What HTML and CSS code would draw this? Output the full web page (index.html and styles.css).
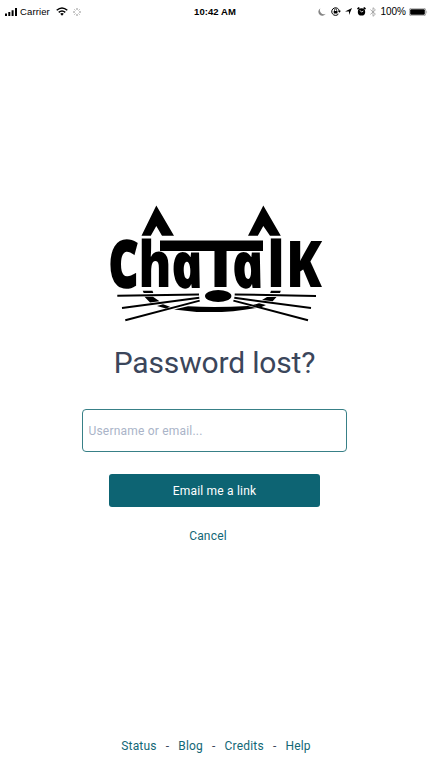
FILE: index.html
```html
<!DOCTYPE html>
<html lang="en">
<head>
<meta charset="utf-8">
<title>Password lost?</title>
<link rel="stylesheet" href="styles.css">
</head>
<body>
<header class="status">
  <div class="side">
    <svg class="signal" width="13" height="8" viewBox="0 0 13 8"><path d="M0 5.5h2V8H0zM3.3 4h2v4h-2zM6.6 2.2h2V8h-2zM10 0h2v8h-2z"/></svg>
    <span class="carrier">Carrier</span>
    <svg class="wifi" width="12" height="9" viewBox="0 0 12 9"><g fill="none" stroke="#000" stroke-width="1.5"><path d="M.7 3.3q5.3-4.6 10.6 0M2.7 5.3q3.3-2.7 6.6 0"/></g><path d="M4.2 6.8q1.8-1.4 3.6 0L6 8.7z"/></svg>
    <svg class="spinner" width="8" height="8" viewBox="0 0 8 8"><g stroke="#777" stroke-width=".8"><path d="M4 0v2M4 6v2M0 4h2M6 4h2"/><path stroke="#aaa" d="M1.2 1.2l1.4 1.4M5.4 5.4l1.4 1.4M1.2 6.8l1.4-1.4M5.4 2.6l1.4-1.4"/></g></svg>
  </div>
  <time class="clock">10:42 AM</time>
  <div class="side right">
    <svg class="moon" width="8" height="8" viewBox="0 0 8 8"><path fill="#858585" d="M2.5.2A4 4 0 1 0 7.8 5.8 4 4 0 0 1 2.5.2z"/></svg>
    <svg class="lock" width="10" height="9" viewBox="0 0 10 9"><path fill="none" stroke="#000" d="M7.4 7.1A3.8 3.8 0 1 1 8.3 4"/><path d="M6.8 3.8H10L8.4 5.8zM2.7 4h3.8v2.6H2.7z"/><path fill="none" stroke="#000" stroke-width=".7" d="M3.5 4V3a1.1 1.1 0 0 1 2.2 0v1"/></svg>
    <svg class="arrow" width="7" height="7" viewBox="0 0 7 7"><path d="M7 0L4 7V3.4H0z"/></svg>
    <svg class="alarm" width="9" height="9" viewBox="0 0 9 9"><circle cx="4.5" cy="4.9" r="3.7"/><path stroke="#000" stroke-width="1.6" d="M.5 2L2.4.6M8.5 2L6.6.6"/><path fill="none" stroke="#fff" stroke-width=".8" d="M3 3.3l1.5 1.8L6.3 4"/></svg>
    <svg class="bluetooth" width="6" height="10" viewBox="0 0 6 10"><path fill="none" stroke="#999" stroke-width=".8" d="M.4 2.6l5 4.5L3 9.3V.7l2.4 2.2-5 4.5"/></svg>
    <span class="percent">100%</span>
    <svg class="battery" width="19" height="8" viewBox="0 0 19 8"><rect x=".3" y=".3" width="16.4" height="7.4" rx="1.8" fill="none" stroke="#777" stroke-width=".6"/><rect x="1.2" y="1.2" width="14.6" height="5.6" rx="1"/><path fill="#888" d="M17.5 2.6q1.4 1.4 0 2.8z"/></svg>
  </div>
</header>
<main class="content">
  <svg class="logo" width="216" height="120" viewBox="108 203 216 120" role="img" aria-label="ChaTalK">
    <path d="M156.3 205.5L174 235.8H162L156.3 226l-5.5 9.8H141.5zM263.3 205.5L280.8 235.8H270L263.3 226l-5.5 9.8H248zM160 240.5H263V251H160z"/>
    <g class="letters">
      <text class="bold" transform="translate(109 287)" textLength="29" lengthAdjust="spacingAndGlyphs">C</text>
      <text transform="translate(138.6 287)" textLength="33" lengthAdjust="spacingAndGlyphs">h</text>
      <text class="upright" transform="translate(174.5 287.5) skewX(11)" textLength="32" lengthAdjust="spacingAndGlyphs">a</text>
      <text transform="translate(202 287)" textLength="37" lengthAdjust="spacingAndGlyphs">T</text>
      <text class="upright" transform="translate(235.3 287.5) skewX(11)" textLength="32" lengthAdjust="spacingAndGlyphs">a</text>
      <text transform="translate(267.2 287)" textLength="17.5" lengthAdjust="spacingAndGlyphs">l</text>
      <text transform="translate(286 287)" textLength="36" lengthAdjust="spacingAndGlyphs">K</text>
    </g>
    <path d="M142.7 290.8h9.8l.8 2.2h-9.6zM144.5 296.8h8.5l6.5 4.4-9.5 1.3zM157 306l6-1.8 7 2.5-4 1.8zM174 309.4l14-3.2q28 1.6 60-.3l8 2q-41 7.5-82 1.5zM280.8 290.8H271l-.8 2.2H280zM276.5 297h-9.5l-5 2.9 10.7 1.3zM266 305l-7-1.8-6 1.8 8 2.2z"/>
    <ellipse cx="218.2" cy="296" rx="13.2" ry="6"/>
    <path class="whiskers" d="M117.3 295.7l81.7-1.3M122 308l77.3-10.2M125.3 320.2l74.4-19.6M234.7 294.4l81.3 1.5M234.3 297.8L311 308M233.4 300.6l74.6 19.6"/>
  </svg>
  <h1>Password lost?</h1>
  <form>
    <input type="text" placeholder="Username or email..." aria-label="Username or email">
    <button type="button">Email me a link</button>
  </form>
  <a class="cancel">Cancel</a>
</main>
<footer><a>Status</a><span>-</span><a>Blog</a><span>-</span><a>Credits</a><span>-</span><a>Help</a></footer>
</body>
</html>
```
FILE: styles.css
```css
* { box-sizing: border-box; }
body {
  margin: 0;
  height: 768px;
  display: flex;
  flex-direction: column;
  overflow: hidden;
  background: #fff;
  color: #3b465b;
  font-family: Roboto, sans-serif;
  font-size: 12px;
  letter-spacing: .2px;
}
svg { display: block; flex: none; }
.status {
  height: 23px;
  padding: 0 5px;
  display: grid;
  grid-template-columns: 1fr auto 1fr;
  align-items: center;
  color: #000;
  font: 9.5px/23px "Liberation Sans", sans-serif;
  letter-spacing: 0;
}
.side { display: flex; align-items: center; height: 23px; }
.right { justify-content: flex-end; }
.carrier { margin-left: 2px; letter-spacing: .12px; }
.wifi { margin-left: 6px; }
.spinner { margin-left: 5px; }
.clock { margin-right: 2px; font-weight: bold; letter-spacing: .05px; }
.moon { margin-right: 1px; }
.lock { margin-left: 4px; }
.arrow { margin-left: 4px; }
.alarm { margin-left: 5px; }
.bluetooth { margin-left: 4px; }
.percent { margin-left: 4px; font-size: 10px; }
.battery { margin-left: 3px; margin-right: -1px; }
.content { flex: 1; display: flex; flex-direction: column; align-items: center; }
.logo { margin-top: 180px; overflow: visible; }
.letters { font: 800 64px "Open Sans", sans-serif; letter-spacing: 0; }
.letters .upright { font-style: italic; }
.letters .bold { stroke: #000; stroke-width: 2.5px; }
.whiskers { fill: none; stroke: #000; stroke-width: 2; }
h1 { margin: 22px 3px 0 0; font-size: 30px; line-height: 36px; font-weight: 400; letter-spacing: -.17px; }
form { display: flex; flex-direction: column; align-items: center; margin-right: 3px; }
input {
  width: 265px;
  height: 43px;
  margin-top: 28px;
  padding: 0 5.5px;
  border: 1px solid #388087;
  border-radius: 4px;
  background: #fff;
  font: inherit;
  letter-spacing: inherit;
}
input::placeholder { color: #aab4c8; opacity: 1; }
button {
  width: 211px;
  height: 33.5px;
  margin: 21.7px 0 0;
  padding: 1px 0 0;
  border: 0;
  border-radius: 3px;
  background: #0d6473;
  color: #fff;
  font: inherit;
  letter-spacing: inherit;
}
a { color: #126776; }
.cancel { margin: 20.8px 16px 0 0; line-height: 16px; }
footer { height: 30px; display: flex; justify-content: center; gap: 9px; line-height: 16px; }
```
